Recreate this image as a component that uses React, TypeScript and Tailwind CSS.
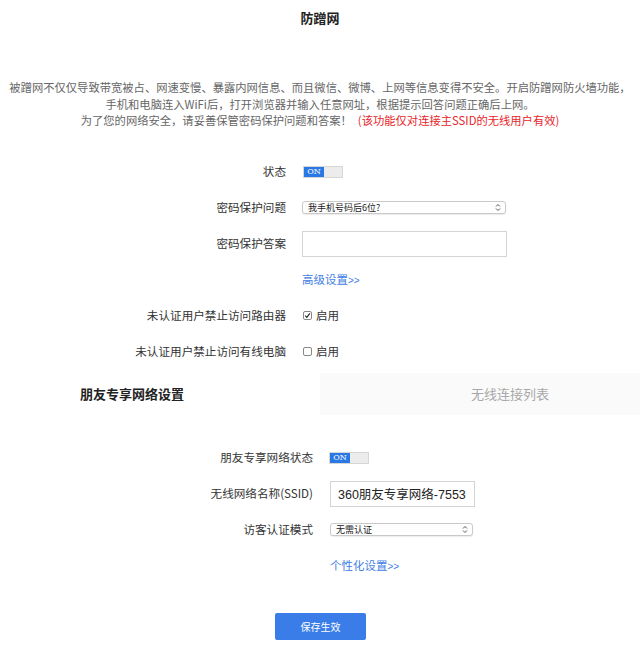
import { useState } from "react";

const font = "font-['Noto_Sans_CJK_SC','Liberation_Sans',sans-serif]";

function Toggle({ on }: { on: boolean }) {
  return (
    <div className="flex h-[12px] w-[40px] border border-[#d6d6d6] bg-[#ececec]">
      <div
        className={`flex w-[20px] items-center justify-center text-[8px] leading-none text-white font-['DejaVu_Serif',serif] ${
          on ? "bg-[#2a78e4]" : "bg-transparent"
        }`}
      >
        {on ? "ON" : ""}
      </div>
    </div>
  );
}

function Arrows() {
  return (
    <svg width="6" height="9" viewBox="0 0 6 9" className="shrink-0">
      <path d="M1 3.5 L3 1.5 L5 3.5" fill="none" stroke="#555" strokeWidth="1" />
      <path d="M1 5.5 L3 7.5 L5 5.5" fill="none" stroke="#555" strokeWidth="1" />
    </svg>
  );
}

function FakeSelect({ value, width }: { value: string; width: string }) {
  return (
    <div
      className={`flex h-[13px] items-center justify-between rounded-[3px] border border-[#c9c9c9] bg-white pl-[5px] pr-[4px] shadow-[0_1px_1px_rgba(0,0,0,0.08)] ${width}`}
    >
      <span className="text-[9px] leading-none text-[#222]">{value}</span>
      <Arrows />
    </div>
  );
}

function Row({
  label,
  labelWidth,
  children,
}: {
  label: string;
  labelWidth: string;
  children?: React.ReactNode;
}) {
  return (
    <div className="flex h-[36px] items-center">
      <div className={`shrink-0 text-right text-[11.6px] text-[#333] ${labelWidth}`}>{label}</div>
      <div className="flex items-center">{children}</div>
    </div>
  );
}

function Check({ checked, onToggle }: { checked: boolean; onToggle: () => void }) {
  return (
    <button onClick={onToggle} className="ml-[17px] flex items-center gap-[4px]">
      <span className="flex h-[9px] w-[9px] items-center justify-center rounded-[2px] border border-[#888] bg-white">
        {checked && (
          <svg width="7" height="7" viewBox="0 0 7 7">
            <path d="M1.2 3.6 L2.8 5.3 L5.8 1.3" fill="none" stroke="#222" strokeWidth="1.1" />
          </svg>
        )}
      </span>
      <span className="text-[11.5px] text-[#333]">启用</span>
    </button>
  );
}

function MoreLink({ text, offset }: { text: string; offset: string }) {
  return (
    <a className={`cursor-pointer text-[11.5px] text-[#3f80e4] ${offset}`}>
      {text}
      <span className="font-['Liberation_Sans',sans-serif] text-[10px]">&gt;&gt;</span>
    </a>
  );
}

export default function App() {
  const [router, setRouter] = useState(true);
  const [wired, setWired] = useState(false);
  const [answer, setAnswer] = useState("");
  const [ssid, setSsid] = useState("360朋友专享网络-7553");

  return (
    <div className={`h-[650px] w-[640px] overflow-hidden bg-white ${font}`}>
      <h1 className="pt-[8px] text-center text-[13px] font-bold leading-[20px] text-[#222]">防蹭网</h1>

      <p className="mt-[51px] text-center text-[11.3px] leading-[16.5px] text-[#666]">
        被蹭网不仅仅导致带宽被占、网速变慢、暴露内网信息、而且微信、微博、上网等信息变得不安全。开启防蹭网防火墙功能，
        <br />
        手机和电脑连入WiFi后，打开浏览器并输入任意网址，根据提示回答问题正确后上网。
        <br />
        为了您的网络安全，请妥善保管密码保护问题和答案！
        <span className="ml-[6px] text-[#e8242a]">(该功能仅对连接主SSID的无线用户有效)</span>
      </p>

      <div className="mt-[25px]">
        <Row label="状态" labelWidth="w-[286px]">
          <div className="ml-[17px]">
            <Toggle on />
          </div>
        </Row>
        <Row label="密码保护问题" labelWidth="w-[286px]">
          <div className="ml-[16px]">
            <FakeSelect value="我手机号码后6位?" width="w-[204px]" />
          </div>
        </Row>
        <Row label="密码保护答案" labelWidth="w-[286px]">
          <input
            value={answer}
            onChange={(event) => setAnswer(event.target.value)}
            className="ml-[16px] h-[26px] w-[205px] border border-[#d4d4d4] px-2 text-[13px] outline-none"
          />
        </Row>
        <Row label="" labelWidth="w-[286px]">
          <MoreLink text="高级设置" offset="ml-[16px]" />
        </Row>
        <Row label="未认证用户禁止访问路由器" labelWidth="w-[286px]">
          <Check checked={router} onToggle={() => setRouter(!router)} />
        </Row>
        <Row label="未认证用户禁止访问有线电脑" labelWidth="w-[286px]">
          <Check checked={wired} onToggle={() => setWired(!wired)} />
        </Row>
      </div>

      <div className="mt-[3px] flex h-[42px]">
        <div className="flex w-[320px] items-center pl-[80px] text-[13px] font-bold text-[#222]">
          朋友专享网络设置
        </div>
        <div className="flex flex-1 items-center justify-center bg-[#fafafa] pl-[60px] text-[13px] text-[#a8a8a8]">
          无线连接列表
        </div>
      </div>

      <div className="mt-[25px]">
        <Row label="朋友专享网络状态" labelWidth="w-[313px]">
          <div className="ml-[16px]">
            <Toggle on />
          </div>
        </Row>
        <Row label="无线网络名称(SSID)" labelWidth="w-[313px]">
          <input
            value={ssid}
            onChange={(event) => setSsid(event.target.value)}
            className="ml-[17px] h-[26px] w-[145px] border border-[#d4d4d4] px-[7px] font-['Liberation_Sans','Noto_Sans_CJK_SC',sans-serif] text-[12.5px] text-[#222] outline-none"
          />
        </Row>
        <Row label="访客认证模式" labelWidth="w-[313px]">
          <div className="ml-[17px]">
            <FakeSelect value="无需认证" width="w-[143px]" />
          </div>
        </Row>
        <Row label="" labelWidth="w-[313px]">
          <MoreLink text="个性化设置" offset="ml-[17px]" />
        </Row>
      </div>

      <div className="mt-[29px] flex justify-center">
        <button className="ml-[1px] h-[27px] w-[91px] rounded-[2px] bg-[#3a7de8] text-[10px] text-white">
          保存生效
        </button>
      </div>
    </div>
  );
}
